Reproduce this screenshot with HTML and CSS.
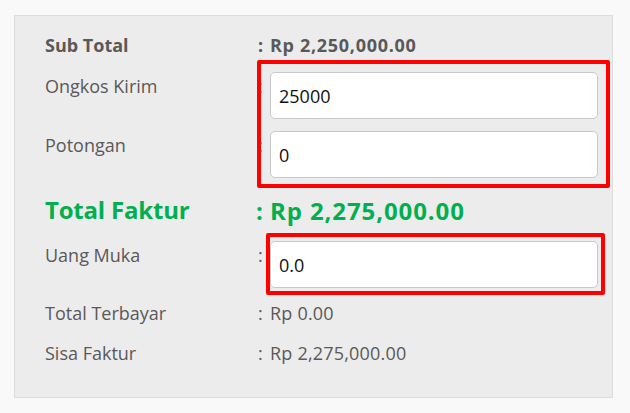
FILE: index.html
```html
<!DOCTYPE html>
<html lang="id">
<head>
  <meta charset="UTF-8" />
  <meta name="viewport" content="width=device-width, initial-scale=1.0"/>
  <title>Ringkasan Faktur</title>
  <link rel="stylesheet" href="styles.css">
</head>
<body>
  <div class="panel">

    <div class="row strong">
      <div class="label">Sub Total</div>
      <div class="colon">:</div>
      <div class="value">Rp 2,250,000.00</div>
    </div>

    <div class="group">
      <div class="row field">
        <div class="label">Ongkos Kirim</div>
        <div class="colon">:</div>
        <input class="box" type="text" value="25000">
      </div>
      <div class="row field">
        <div class="label">Potongan</div>
        <div class="colon">:</div>
        <input class="box" type="text" value="0">
      </div>
      <div class="mark mark-ongkos"></div>
    </div>

    <div class="row total">
      <div class="label">Total Faktur</div>
      <div class="colon">:</div>
      <div class="value">Rp 2,275,000.00</div>
    </div>

    <div class="group">
      <div class="row field">
        <div class="label">Uang Muka</div>
        <div class="colon">:</div>
        <input class="box" type="text" value="0.0">
      </div>
      <div class="mark mark-dp"></div>
    </div>

    <div class="row paid">
      <div class="label">Total Terbayar</div>
      <div class="colon">:</div>
      <div class="value">Rp 0.00</div>
    </div>

    <div class="row last">
      <div class="label">Sisa Faktur</div>
      <div class="colon">:</div>
      <div class="value">Rp 2,275,000.00</div>
    </div>

  </div>
</body>
</html>
```

FILE: styles.css
```css
body {
  margin: 0;
  padding: 15px 17px 17px 14px;
  background-color: #f9f9f9;
  font-family: "Open Sans", "Noto Sans", Arial, sans-serif;
  font-size: 18px;
  color: #595959;
}

.panel {
  background-color: #ececec;
  border: 1px solid #dcdcdc;
  padding: 17px 14px 32px 30px;
}

.row {
  display: grid;
  grid-template-columns: 213px 12px 1fr;
  line-height: 24px;
  margin-top: 15px;
}

.row:first-child {
  margin-top: 0;
}

.row.paid {
  margin-top: 13px;
}

.row.last {
  margin-top: 16px;
}

.value {
  letter-spacing: 0.2px;
}

.strong {
  font-weight: bold;
}

.strong .value {
  letter-spacing: 0.7px;
}

.total {
  margin-top: 18px;
  font-size: 24px;
  line-height: 30px;
  font-weight: bold;
  color: #00b04f;
}

.total .label {
  margin-top: -1px;
  letter-spacing: -0.2px;
}

.total .colon {
  margin-left: -2px;
}

.total .value {
  letter-spacing: 0.9px;
}

.group {
  position: relative;
  margin-top: 15px;
}

.group .row {
  margin-top: 12px;
}

.group .row:first-child {
  margin-top: 0;
}

.field .label,
.field .colon {
  padding-top: 2px;
}

.box {
  box-sizing: border-box;
  height: 47px;
  width: 100%;
  border: 1px solid #c8c8c8;
  border-radius: 5px;
  background-color: #fff;
  padding: 0 8px;
  font-family: inherit;
  font-size: 18px;
  color: #111;
}

.mark {
  position: absolute;
  border: 4px solid #ff0000;
  border-radius: 2px;
  pointer-events: none;
}

.mark-ongkos {
  left: 212px;
  right: -12px;
  top: -12px;
  bottom: -10px;
}

.mark-dp {
  left: 221px;
  right: -7px;
  top: -8px;
  bottom: -7px;
}
```
